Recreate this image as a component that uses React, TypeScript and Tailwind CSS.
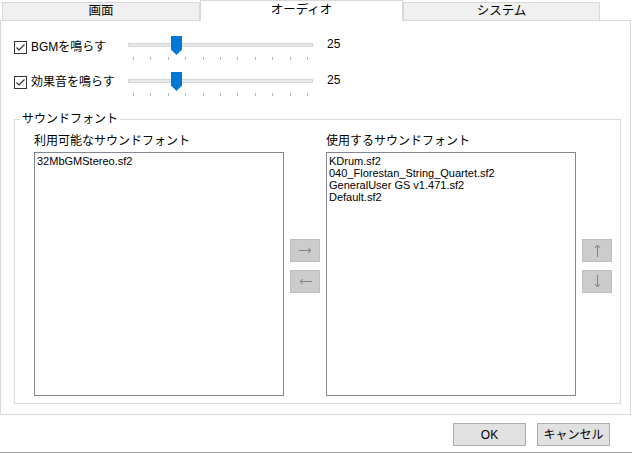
import React from "react";

const FONT = "[font-family:'Liberation_Sans','Noto_Sans_CJK_JP',sans-serif]";

function CheckBox({ label }: { label: string }) {
  return (
    <label className="flex items-center gap-[4px] text-[12px] leading-[14px] text-black">
      <span className="flex h-[13px] w-[13px] items-center justify-center border border-[#333333] bg-white">
        <svg width="11" height="11" viewBox="0 0 11 11">
          <path d="M1.5 5.5 L4 8 L9.5 2.5" fill="none" stroke="#333333" strokeWidth="1.2" />
        </svg>
      </span>
      <span>{label}</span>
    </label>
  );
}

function Slider({ thumb }: { thumb: number }) {
  const ticks = Array.from({ length: 11 });
  return (
    <div className="relative w-[185px]">
      <div className="mt-[7px] h-[4px] border border-[#d6d6d6] bg-[#e7eaea]" />
      <svg
        className="absolute top-0"
        style={{ left: thumb }}
        width="11"
        height="19"
        viewBox="0 0 11 19"
      >
        <path d="M0 0 H11 V13.5 L5.5 19 L0 13.5 Z" fill="#0078d7" />
      </svg>
      <div className="mt-[10px] flex justify-between px-[5px]">
        {ticks.map((_, i) => (
          <span key={i} className="h-[3px] w-px bg-[#b4b4b4]" />
        ))}
      </div>
    </div>
  );
}

// thin windows-style arrows, rotated from a right-pointing one
function ArrowButton({ dir }: { dir: "right" | "left" | "up" | "down" }) {
  const rot = { right: 0, left: 180, up: -90, down: 90 }[dir];
  return (
    <div className="flex h-[23px] w-[30px] items-center justify-center border border-[#bfbfbf] bg-[#cccccc]">
      <svg width="15" height="15" viewBox="0 0 15 15" style={{ transform: `rotate(${rot}deg)` }}>
        <path d="M1 7.5 H13 M10 5 L13 7.5 L10 10" fill="none" stroke="#838383" strokeWidth="1" />
      </svg>
    </div>
  );
}

function ListBox({ items }: { items: string[] }) {
  return (
    <div className="h-[244px] w-[250px] border border-[#828790] bg-white px-[2px] pt-[2px] text-[11px] leading-[12px] text-black">
      {items.map((s) => (
        <div key={s} className="whitespace-nowrap">
          {s}
        </div>
      ))}
    </div>
  );
}

const tabs = ["画面", "オーディオ", "システム"];

export default function App() {
  return (
    <div className={`h-[453px] w-[632px] border-b border-[#a0a0a0] bg-white ${FONT}`}>
      <div className="relative z-10 flex h-[21px] items-end pl-[2px]">
        {tabs.map((t, i) =>
          i === 1 ? (
            <div
              key={t}
              className="flex h-[21px] w-[203px] items-center justify-center border-x border-t border-[#d9d9d9] bg-white pb-[1px] text-[12.5px] text-black"
            >
              {t}
            </div>
          ) : (
            <div
              key={t}
              className={`flex h-[19px] items-center justify-center border border-[#d9d9d9] bg-[#f0f0f0] text-[12.5px] text-black ${
                i === 0 ? "w-[198px]" : "w-[197px]"
              }`}
            >
              {t}
            </div>
          )
        )}
      </div>

      <div className="-mt-px h-[395px] w-[631px] border border-[#d9d9d9] pl-[13px] pt-[15px]">
        <div className="flex h-[36px] items-start">
          <div className="w-[114px] pt-[4px]">
            <CheckBox label="BGMを鳴らす" />
          </div>
          <Slider thumb={43} />
          <span className="ml-[14px] pt-[1px] text-[12px] leading-[14px] text-black">25</span>
        </div>
        <div className="flex h-[36px] items-start">
          <div className="w-[114px] pt-[3px]">
            <CheckBox label="効果音を鳴らす" />
          </div>
          <Slider thumb={43} />
          <span className="ml-[14px] pt-[1px] text-[12px] leading-[14px] text-black">25</span>
        </div>

        <fieldset className="mt-[4px] w-[607px] border border-[#dcdcdc] p-0">
          <legend className="ml-[5px] px-[2px] text-[12px] leading-[14px] text-black">
            サウンドフォント
          </legend>
          <div className="flex pb-[7px] pl-[19px] pt-[7px]">
            <div className="flex flex-col">
              <span className="h-[16px] text-[12px] leading-[16px] text-black">
                利用可能なサウンドフォント
              </span>
              <div className="mt-[3px]">
                <ListBox items={["32MbGMStereo.sf2"]} />
              </div>
            </div>
            <div className="ml-[6px] flex flex-col gap-[8px] pt-[106px]">
              <ArrowButton dir="right" />
              <ArrowButton dir="left" />
            </div>
            <div className="ml-[6px] flex flex-col">
              <span className="h-[16px] text-[12px] leading-[16px] text-black">
                使用するサウンドフォント
              </span>
              <div className="mt-[3px]">
                <ListBox
                  items={[
                    "KDrum.sf2",
                    "040_Florestan_String_Quartet.sf2",
                    "GeneralUser GS v1.471.sf2",
                    "Default.sf2",
                  ]}
                />
              </div>
            </div>
            <div className="ml-[6px] flex flex-col gap-[8px] pt-[106px]">
              <ArrowButton dir="up" />
              <ArrowButton dir="down" />
            </div>
          </div>
        </fieldset>
      </div>

      <div className="mt-[8px] flex justify-end gap-[11px] pr-[22px]">
        <button className="h-[23px] w-[73px] border border-[#adadad] bg-[#e1e1e1] text-[12px] text-black">
          OK
        </button>
        <button className="h-[23px] w-[73px] border border-[#adadad] bg-[#e1e1e1] text-[12px] text-black">
          キャンセル
        </button>
      </div>
    </div>
  );
}
